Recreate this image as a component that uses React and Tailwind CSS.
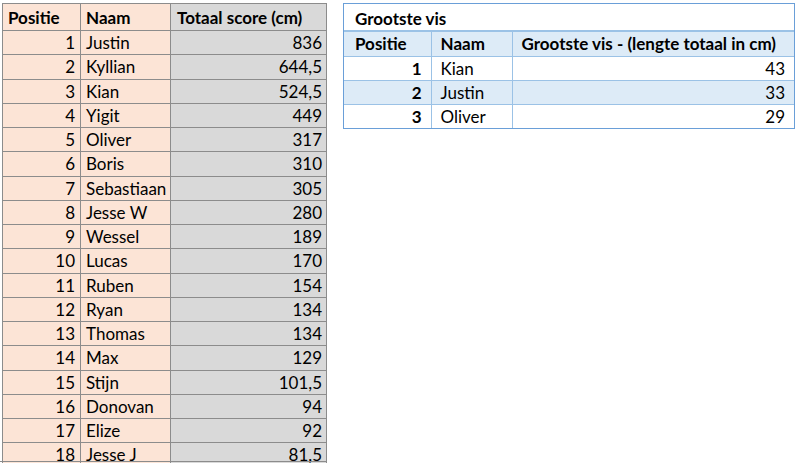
import React from "react";

const rows = [
  [1, "Justin", "836"],
  [2, "Kyllian", "644,5"],
  [3, "Kian", "524,5"],
  [4, "Yigit", "449"],
  [5, "Oliver", "317"],
  [6, "Boris", "310"],
  [7, "Sebastiaan", "305"],
  [8, "Jesse W", "280"],
  [9, "Wessel", "189"],
  [10, "Lucas", "170"],
  [11, "Ruben", "154"],
  [12, "Ryan", "134"],
  [13, "Thomas", "134"],
  [14, "Max", "129"],
  [15, "Stijn", "101,5"],
  [16, "Donovan", "94"],
  [17, "Elize", "92"],
  [18, "Jesse J", "81,5"],
];

const big = [
  [1, "Kian", "43"],
  [2, "Justin", "33"],
  [3, "Oliver", "29"],
];

export default function App() {
  return (
    <div
      className="w-[800px] h-[463px] overflow-hidden bg-white text-black flex items-start pt-[3px] pl-[2px] relative"
      style={{ fontFamily: "Lato, 'Open Sans', sans-serif" }}
    >
      <table className="border-collapse text-[17px] leading-none">
        <thead>
          <tr className="h-[27px]">
            <th className="w-[78px] border border-[#8c8c8c] bg-[#fce4d6] text-left pl-[5px] font-bold">Positie</th>
            <th className="w-[90px] border border-[#8c8c8c] bg-[#fce4d6] text-left pl-[5px] font-bold">Naam</th>
            <th className="w-[156px] border border-[#8c8c8c] bg-[#d9d9d9] text-left pl-[6px] font-bold">Totaal score (cm)</th>
          </tr>
        </thead>
        <tbody>
          {rows.map(([p, n, s]) => (
            <tr key={p} className="h-[24.25px]">
              <td className="border border-[#8c8c8c] bg-[#fce4d6] text-right pr-[5px]">{p}</td>
              <td className="border border-[#8c8c8c] bg-[#fce4d6] text-left pl-[5px]">{n}</td>
              <td className="border border-[#8c8c8c] bg-[#d9d9d9] text-right pr-[4px]">{s}</td>
            </tr>
          ))}
        </tbody>
      </table>

      <div className="ml-[16px] w-[452px] border border-[#6a9fd8] text-[17px] leading-none">
        <div className="h-[26px] flex items-end pb-[3px] pl-[11px] font-bold">Grootste vis</div>
        <table className="w-full border-collapse">
          <thead>
            <tr className="h-[25px] bg-[#ddebf7]">
              <th className="w-[87px] border-t-2 border-[#9bc2e6] text-left pl-[11px] font-bold">Positie</th>
              <th className="w-[81px] border-t-2 border-l border-[#9bc2e6] text-left pl-[9px] font-bold">Naam</th>
              <th className="border-t-2 border-l border-[#9bc2e6] text-left pl-[9px] font-bold">Grootste vis - (lengte totaal in cm)</th>
            </tr>
          </thead>
          <tbody>
            {big.map(([p, n, s], i) => (
              <tr key={p} className={`h-[24px] ${i % 2 === 1 ? "bg-[#ddebf7]" : "bg-white"}`}>
                <td className="border-t border-[#9bc2e6] text-right pr-[9px] font-bold">{p}</td>
                <td className="border-t border-l border-[#9bc2e6] text-left pl-[9px]">{n}</td>
                <td className="border-t border-l border-[#9bc2e6] text-right pr-[9px]">{s}</td>
              </tr>
            ))}
          </tbody>
        </table>
      </div>
      <div className="absolute left-0 top-[461px] w-[327px] h-[1px] bg-[#8c8c8c]" />
    </div>
  );
}
